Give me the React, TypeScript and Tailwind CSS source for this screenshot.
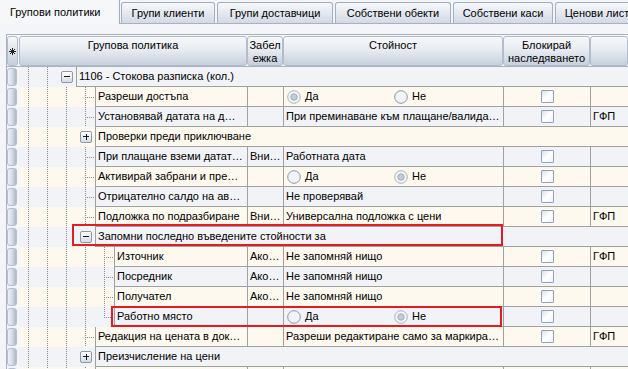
import React from 'react';

type Radio = { radio: 'da' | 'ne' };

type RowData = {
  level: 1 | 2 | 3;
  group?: '+' | '-';
  name: string;
  note?: string;
  value?: string | Radio;
  gfp?: boolean;
  last?: boolean;
  mark?: 'group' | 'row';
};

const rows: RowData[] = [
  { level: 1, group: '-', name: '1106 - Стокова разписка (кол.)' },
  { level: 2, name: 'Разреши достъпа', value: { radio: 'da' } },
  { level: 2, name: 'Установявай датата на д…', value: 'При преминаване към плащане/валида…', gfp: true },
  { level: 2, group: '+', name: 'Проверки преди приключване' },
  { level: 2, name: 'При плащане вземи датат…', note: 'Вни…', value: 'Работната дата' },
  { level: 2, name: 'Активирай забрани и пре…', value: { radio: 'ne' } },
  { level: 2, name: 'Отрицателно салдо на ав…', value: 'Не проверявай' },
  { level: 2, name: 'Подложка по подразбиране', note: 'Вни…', value: 'Универсална подложка с цени', gfp: true },
  { level: 2, group: '-', name: 'Запомни последно въведените стойности за', mark: 'group' },
  { level: 3, name: 'Източник', note: 'Ако…', value: 'Не запомняй нищо', gfp: true },
  { level: 3, name: 'Посредник', note: 'Ако…', value: 'Не запомняй нищо' },
  { level: 3, name: 'Получател', note: 'Ако…', value: 'Не запомняй нищо' },
  { level: 3, name: 'Работно място', value: { radio: 'ne' }, last: true, mark: 'row' },
  { level: 2, name: 'Редакция на цената в док…', value: 'Разреши редактиране само за маркира…', gfp: true },
  { level: 2, group: '+', name: 'Преизчисление на цени' },
  { level: 2, name: '', value: '' },
];

const tabs = [
  { label: 'Групи клиенти', w: 'w-[94px]' },
  { label: 'Групи доставчици', w: 'w-[116px]' },
  { label: 'Собствени обекти', w: 'w-[116px]' },
  { label: 'Собствени каси', w: 'w-[100px]' },
  { label: 'Ценови листи', w: 'w-[90px]' },
];

function Tabs() {
  return (
    <div className="flex h-6 items-end">
      <div className="flex h-6 w-[120px] shrink-0 items-center border-r border-[#9fabbc] bg-[#f6f7f9] pl-[10px]">
        Групови политики
      </div>
      <div className="flex h-6 flex-1 items-end gap-[2px] border-b border-[#a7b1c0] pl-px">
        {tabs.map((t) => (
          <div
            key={t.label}
            className={`${t.w} flex h-[21px] shrink-0 items-center justify-center rounded-t-[3px] border border-b-0 border-[#a3aebe] bg-linear-to-b from-[#f6f8fa] to-[#d3dae4] pt-px`}
          >
            {t.label}
          </div>
        ))}
      </div>
    </div>
  );
}

function HeadCell({ w, children }: { w: string; children?: React.ReactNode }) {
  return (
    <div
      className={`${w} flex h-[30px] shrink-0 justify-center rounded-[3px] border border-[#b3bccb] bg-linear-to-b from-[#f7f8fa] via-[#e6eaf0] to-[#c6cfdc] pt-[2px] text-center leading-[13px]`}
    >
      {children}
    </div>
  );
}

function Header() {
  return (
    <div className="flex h-[32px] border-b border-[#a9b2bf] pt-px">
      <div className="flex h-[30px] w-[11px] shrink-0 items-center justify-center rounded-[3px] border border-[#b3bccb] bg-linear-to-b from-[#f7f8fa] to-[#c6cfdc]">
        <svg width="7" height="7" viewBox="0 0 7 7" stroke="#222" strokeWidth="1">
          <line x1="3.5" y1="0" x2="3.5" y2="7" />
          <line x1="0" y1="3.5" x2="7" y2="3.5" />
          <line x1="1" y1="1" x2="6" y2="6" />
          <line x1="6" y1="1" x2="1" y2="6" />
        </svg>
      </div>
      <div className="w-px shrink-0" />
      <HeadCell w="w-[228px]">Групова политика</HeadCell>
      <HeadCell w="w-[36px]">
        Забел
        <br />
        ежка
      </HeadCell>
      <HeadCell w="w-[220px]">Стойност</HeadCell>
      <HeadCell w="w-[87px]">
        Блокирай
        <br />
        наследяването
      </HeadCell>
      <HeadCell w="w-[38px]" />
    </div>
  );
}

function Guide({ kind }: { kind: 'line' | 'tee' | 'end' }) {
  return (
    <svg width="19" height="20" className="block shrink-0" shapeRendering="crispEdges">
      <line x1="9.5" y1="0" x2="9.5" y2={kind === 'end' ? 11 : 20} stroke="#8a8a8a" strokeDasharray="1 1" />
      {kind !== 'line' && (
        <line x1="11" y1="10.5" x2="19" y2="10.5" stroke="#8a8a8a" strokeDasharray="1 1" />
      )}
    </svg>
  );
}

function Expander({ sign }: { sign: '+' | '-' }) {
  return (
    <div className="flex h-5 w-[19px] shrink-0 items-center justify-center">
      <div className="flex h-[12px] w-[12px] items-center justify-center rounded-[2px] border border-[#8d98a8] bg-linear-to-b from-white to-[#d5dbe4]">
        <svg width="8" height="8" viewBox="0 0 8 8" shapeRendering="crispEdges">
          <rect x="1" y="3" width="6" height="1" fill="#1a1a1a" />
          {sign === '+' && <rect x="3.5" y="0.5" width="1" height="6" fill="#1a1a1a" />}
        </svg>
      </div>
    </div>
  );
}

function RadioBtn({ on }: { on: boolean }) {
  return (
    <svg width="14" height="14" viewBox="0 0 14 14" className="shrink-0">
      <circle cx="7" cy="7" r="6.3" fill="#f2f4f7" stroke={on ? '#a9b3c0' : '#8797ae'} />
      {on && <circle cx="7" cy="7" r="3.2" fill="#c4ccd6" stroke="#a3adba" />}
    </svg>
  );
}

function Check() {
  return (
    <div className="h-[13px] w-[13px] rounded-[1px] border border-[#8fa1bb] bg-linear-to-br from-[#dde2e9] via-white to-[#f1f3f6]" />
  );
}

function ValueCell({ value }: { value?: string | Radio }) {
  if (value && typeof value === 'object') {
    return (
      <div className="flex h-5 w-[220px] shrink-0 items-center border-b border-l border-[#a0a0a0] pl-[3px]">
        <div className="flex w-[107px] items-center gap-[4px]">
          <RadioBtn on={value.radio === 'da'} />
          Да
        </div>
        <div className="flex items-center gap-[4px]">
          <RadioBtn on={value.radio === 'ne'} />
          Не
        </div>
      </div>
    );
  }
  return (
    <div className="flex h-5 w-[220px] shrink-0 items-center overflow-hidden whitespace-nowrap border-b border-l border-[#a0a0a0] pl-[2px]">
      {value}
    </div>
  );
}

const nameWidth: Record<number, string> = {
  1: 'w-[171px]',
  2: 'w-[152px]',
  3: 'w-[133px]',
};

function GridRow({ row, index }: { row: RowData; index: number }) {
  const bg = index % 2 === 0 ? 'bg-[#f1f3f6]' : 'bg-[#fdf9ee]';
  const guides: React.ReactNode[] = [];
  for (let j = 0; j <= row.level; j++) guides.push(<Guide key={j} kind="line" />);

  return (
    <div className={`relative flex h-5 ${bg}`}>
      <div className="flex h-5 w-[12px] shrink-0 justify-start bg-[#f4f5f8] pt-px">
        <div className="h-[18px] w-[10px] rounded-[3px] border border-[#b5bfcd] bg-linear-to-r from-[#eef1f5] via-[#d7dde6] to-[#aab6c7]" />
      </div>
      {guides}
      {row.group ? (
        <>
          <Expander sign={row.group} />
          <div className="flex h-5 flex-1 items-center whitespace-nowrap border-b border-l border-[#a0a0a0] pl-[2px]">
            {row.name}
          </div>
        </>
      ) : (
        <>
          <Guide kind={row.last ? 'end' : 'tee'} />
          <div
            className={`${nameWidth[row.level]} flex h-5 shrink-0 items-center overflow-hidden whitespace-nowrap border-b border-l border-[#a0a0a0] pl-[2px]`}
          >
            {row.name}
          </div>
          <div className="flex h-5 w-[36px] shrink-0 items-center overflow-hidden whitespace-nowrap border-b border-l border-[#a0a0a0] pl-[2px]">
            {row.note}
          </div>
          <ValueCell value={row.value} />
          <div className="flex h-5 w-[87px] shrink-0 items-center justify-center border-b border-l border-[#a0a0a0] pl-px">
            {row.name && <Check />}
          </div>
          <div className="flex h-5 flex-1 items-center border-b border-l border-[#a0a0a0] pl-[2px]">
            {row.gfp ? 'ГФП' : ''}
          </div>
        </>
      )}
      {row.mark === 'group' && (
        <div className="pointer-events-none absolute left-[65px] top-[-3px] h-[22px] w-[431px] border-2 border-[#e31b23]" />
      )}
      {row.mark === 'row' && (
        <div className="pointer-events-none absolute left-[104px] top-[-1px] h-[21px] w-[391px] border-2 border-[#e31b23]" />
      )}
    </div>
  );
}

export default function App() {
  return (
    <div className="h-[369px] w-[628px] overflow-hidden bg-[#f4f5f8] font-['Liberation_Sans',Arial,sans-serif] text-[11px] leading-none text-black">
      <Tabs />
      <div className="h-[10px]" />
      <div className="ml-[6px] border-l border-t border-[#a9b2bf]">
        <Header />
        {rows.map((r, i) => (
          <GridRow key={i} row={r} index={i} />
        ))}
      </div>
    </div>
  );
}
